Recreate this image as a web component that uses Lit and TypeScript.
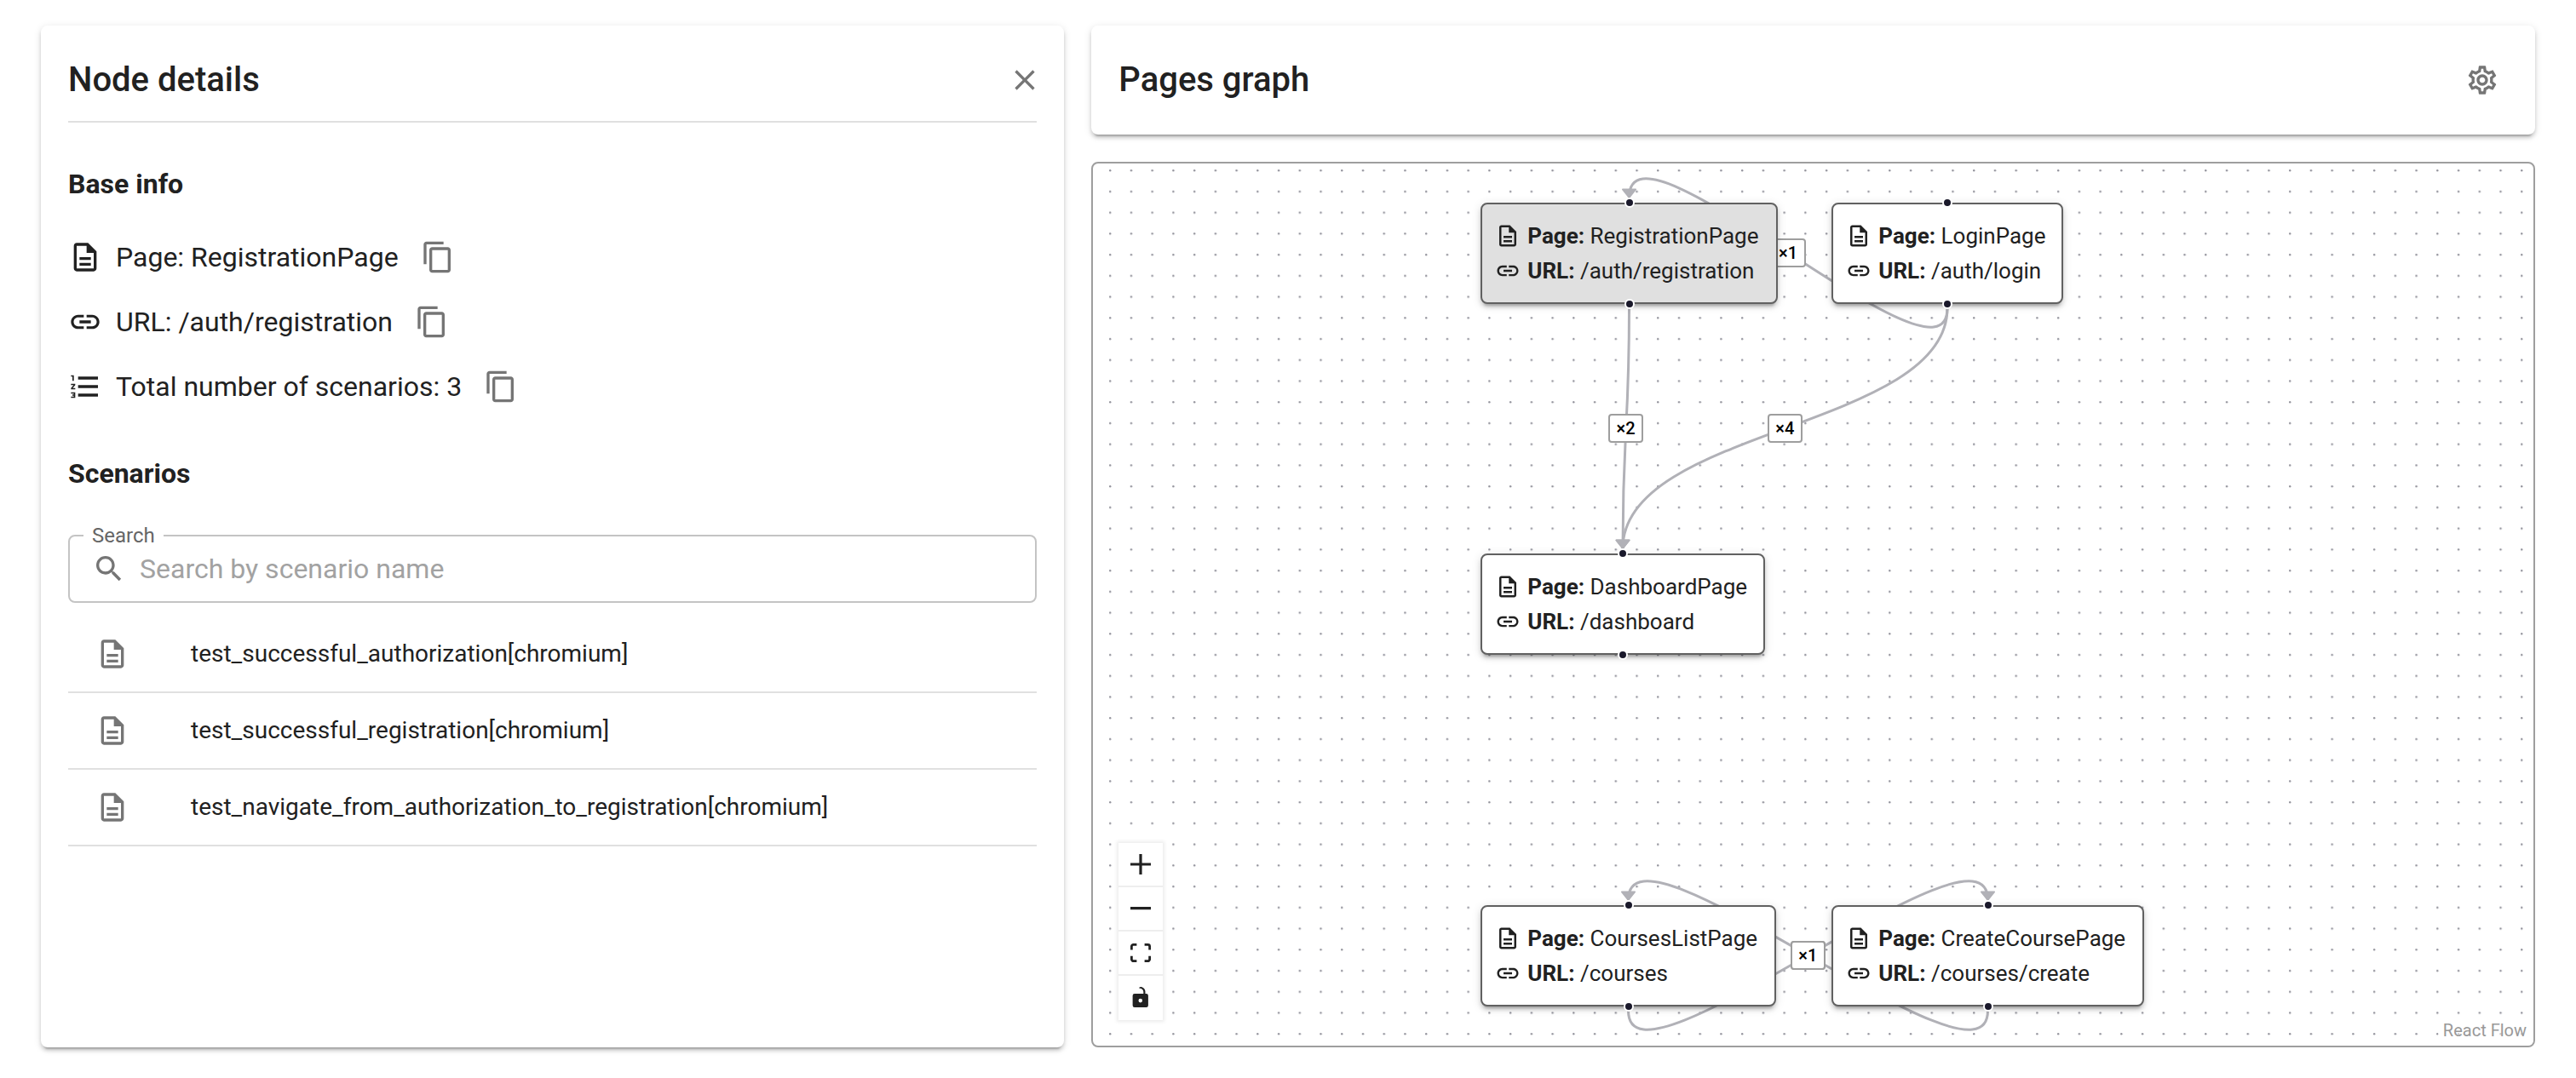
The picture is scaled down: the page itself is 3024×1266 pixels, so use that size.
import { LitElement, html, svg, css } from "lit";
import { customElement, property, state } from "lit/decorators.js";
import { classMap } from "lit/directives/class-map.js";
import { styleMap } from "lit/directives/style-map.js";

const ICONS: Record<string, { box: string; d: string }> = {
  page: {
    box: "0 0 24 24",
    d: "M8 16h8v2H8zm0-4h8v2H8zm6-10H6c-1.1 0-2 .9-2 2v16c0 1.1.89 2 1.99 2H18c1.1 0 2-.9 2-2V8l-6-6zm4 18H6V4h7v5h5v11z",
  },
  link: {
    box: "0 0 24 24",
    d: "M3.9 12c0-1.71 1.39-3.1 3.1-3.1h4V7H7c-2.76 0-5 2.24-5 5s2.24 5 5 5h4v-1.9H7c-1.71 0-3.1-1.39-3.1-3.1zM8 13h8v-2H8v2zm9-6h-4v1.9h4c1.71 0 3.1 1.39 3.1 3.1s-1.39 3.1-3.1 3.1h-4V17h4c2.76 0 5-2.24 5-5s-2.24-5-5-5z",
  },
  list: {
    box: "0 0 24 24",
    d: "M2 17h2v.5H3v1h1v.5H2v1h3v-4H2v1zm1-9h1V4H2v1h1v3zm-1 3h1.8L2 13.1v.9h3v-1H3.2L5 10.9V10H2v1zm5-6v2h14V5H7zm0 14h14v-2H7v2zm0-6h14v-2H7v2z",
  },
  copy: {
    box: "0 0 24 24",
    d: "M16 1H4c-1.1 0-2 .9-2 2v14h2V3h12V1zm3 4H8c-1.1 0-2 .9-2 2v14c0 1.1.9 2 2 2h11c1.1 0 2-.9 2-2V7c0-1.1-.9-2-2-2zm0 16H8V7h11v14z",
  },
  search: {
    box: "0 0 24 24",
    d: "M15.5 14h-.79l-.28-.27C15.41 12.59 16 11.11 16 9.5 16 5.91 13.09 3 9.5 3S3 5.91 3 9.5 5.91 16 9.5 16c1.61 0 3.09-.59 4.23-1.57l.27.28v.79l5 4.99L20.49 19l-4.99-5zm-6 0C7.01 14 5 11.99 5 9.5S7.01 5 9.5 5 14 7.01 14 9.5 11.99 14 9.5 14z",
  },
  close: {
    box: "0 0 24 24",
    d: "M19 6.41 17.59 5 12 10.59 6.41 5 5 6.41 10.59 12 5 17.59 6.41 19 12 13.41 17.59 19 19 17.59 13.41 12z",
  },
  settings: {
    box: "0 0 24 24",
    d: "M19.43 12.98c.04-.32.07-.64.07-.98 0-.34-.03-.66-.07-.98l2.11-1.65c.19-.15.24-.42.12-.64l-2-3.46c-.09-.16-.26-.25-.44-.25-.06 0-.12.01-.17.03l-2.49 1c-.52-.4-1.08-.73-1.69-.98l-.38-2.65C14.46 2.18 14.25 2 14 2h-4c-.25 0-.46.18-.49.42l-.38 2.65c-.61.25-1.17.59-1.69.98l-2.49-1c-.06-.02-.12-.03-.18-.03-.17 0-.34.09-.43.25l-2 3.46c-.13.22-.07.49.12.64l2.11 1.65c-.04.32-.07.65-.07.98 0 .33.03.66.07.98l-2.11 1.65c-.19.15-.24.42-.12.64l2 3.46c.09.16.26.25.44.25.06 0 .12-.01.17-.03l2.49-1c.52.4 1.08.73 1.69.98l.38 2.65c.03.24.24.42.49.42h4c.25 0 .46-.18.49-.42l.38-2.65c.61-.25 1.17-.59 1.69-.98l2.49 1c.06.02.12.03.18.03.17 0 .34-.09.43-.25l2-3.46c.12-.22.07-.49-.12-.64l-2.11-1.65zm-1.98-1.71c.04.31.05.52.05.73 0 .21-.02.43-.05.73l-.14 1.13.89.7 1.08.84-.7 1.21-1.27-.51-1.04-.42-.9.68c-.43.32-.84.56-1.25.73l-1.06.43-.16 1.13-.2 1.35h-1.4l-.19-1.35-.16-1.13-1.06-.43c-.43-.18-.83-.41-1.23-.71l-.91-.7-1.06.43-1.27.51-.7-1.21 1.08-.84.89-.7-.14-1.13c-.03-.31-.05-.54-.05-.74s.02-.43.05-.73l.14-1.13-.89-.7-1.08-.84.7-1.21 1.27.51 1.04.42.9-.68c.43-.32.84-.56 1.25-.73l1.06-.43.16-1.13.2-1.35h1.39l.19 1.35.16 1.13 1.06.43c.43.18.83.41 1.23.71l.91.7 1.06-.43 1.27-.51.7 1.21-1.07.85-.89.7.14 1.13zM12 8c-2.21 0-4 1.79-4 4s1.79 4 4 4 4-1.79 4-4-1.79-4-4-4zm0 6c-1.1 0-2-.9-2-2s.9-2 2-2 2 .9 2 2-.9 2-2 2z",
  },
  plus: {
    box: "0 0 32 32",
    d: "M32 18.133H18.133V32h-4.266V18.133H0v-4.266h13.867V0h4.266v13.867H32z",
  },
  minus: { box: "0 0 32 5", d: "M0 0h32v4.2H0z" },
  fit: {
    box: "0 0 32 30",
    d: "M3.692 4.63c0-.53.4-.938.939-.938h5.215V0H4.708C2.13 0 0 2.054 0 4.63v5.216h3.692V4.631zM27.354 0h-5.2v3.692h5.17c.53 0 .984.4.984.939v5.215H32V4.631A4.624 4.624 0 0027.354 0zm.954 24.83c0 .532-.4.94-.939.94h-5.215v3.768h5.215c2.577 0 4.631-2.13 4.631-4.707v-5.139h-3.692v5.139zm-23.677.94c-.531 0-.939-.4-.939-.94v-5.138H0v5.139c0 2.577 2.13 4.707 4.708 4.707h5.138V25.77H4.631z",
  },
  unlock: {
    box: "0 0 25 32",
    d: "M21.333 10.667H19.81V7.619C19.81 3.429 16.38 0 12.19 0c-4.114 1.828-1.37 2.133.305 2.438 1.676.305 4.42 2.59 4.42 5.181v3.048H3.047A3.056 3.056 0 000 13.714v15.238A3.056 3.056 0 003.048 32h18.285a3.056 3.056 0 003.048-3.048V13.714a3.056 3.056 0 00-3.048-3.047zM12.19 24.533a3.056 3.056 0 01-3.047-3.047 3.056 3.056 0 013.047-3.048 3.056 3.056 0 013.048 3.048 3.056 3.056 0 01-3.048 3.047z",
  },
};

function icon(name: string, cls = "icon") {
  const { box, d } = ICONS[name];
  return html`<svg class=${cls} viewBox=${box} aria-hidden="true"><path d=${d}></path></svg>`;
}

const base = css`
  :host {
    display: block;
    box-sizing: border-box;
    font-family: Roboto, "Liberation Sans", sans-serif;
    color: #212121;
  }
  *,
  *::before,
  *::after {
    box-sizing: border-box;
  }
  h1,
  h2,
  ul,
  dl,
  p {
    margin: 0;
    padding: 0;
  }
  button {
    border: 0;
    background: none;
    font: inherit;
    color: inherit;
    cursor: pointer;
  }
  .icon {
    display: block;
    flex: none;
    width: 40px;
    height: 40px;
    fill: currentColor;
  }
  .card {
    background: #fff;
    border-radius: 8px;
    padding: 32px;
    box-shadow: 0 6px 2px -4px rgba(0, 0, 0, 0.2), 0 4px 4px rgba(0, 0, 0, 0.14),
      0 2px 10px rgba(0, 0, 0, 0.12);
  }
  .bar {
    display: flex;
    align-items: center;
    justify-content: space-between;
    height: 64px;
  }
  .title {
    font-size: 40px;
    line-height: 64px;
    font-weight: 500;
  }
  .icon-button {
    display: grid;
    place-items: center;
    flex: none;
    width: 60px;
    height: 60px;
    padding: 0;
    border-radius: 50%;
    color: #757575;
  }
`;

@customElement("node-details")
class NodeDetails extends LitElement {
  static styles = [
    base,
    css`
      .panel {
        height: 100%;
      }
      .close {
        margin-right: -16px;
      }
      .head {
        padding-bottom: 16px;
        border-bottom: 2px solid #e0e0e0;
      }
      .subtitle {
        margin-top: 48px;
        font-size: 32px;
        line-height: 48px;
        font-weight: 700;
      }
      .info {
        display: flex;
        flex-direction: column;
        gap: 16px;
        margin-top: 32px;
        list-style: none;
      }
      .info-row {
        display: flex;
        align-items: center;
        gap: 16px;
        height: 60px;
        font-size: 32px;
        line-height: 48px;
      }
      .field {
        min-width: 0;
        margin: 48px 0 0;
        padding: 0;
        border: 2px solid #c4c4c4;
        border-radius: 8px;
      }
      .legend {
        height: 2px;
        margin-left: 16px;
        padding: 0 10px;
        font-size: 24px;
        line-height: 2px;
        color: #666;
      }
      .field-body {
        display: flex;
        align-items: center;
        gap: 16px;
        height: 76px;
        padding: 0 26px;
        color: #757575;
      }
      .input {
        flex: 1;
        min-width: 0;
        height: 46px;
        padding: 0;
        border: 0;
        outline: 0;
        background: none;
        font: inherit;
        font-size: 32px;
        color: #212121;
      }
      .input::placeholder {
        color: #a2a2a2;
        opacity: 1;
      }
      .scenarios {
        margin-top: 16px;
        list-style: none;
      }
      .scenario {
        border-bottom: 2px solid #e0e0e0;
      }
      .scenario-button {
        display: flex;
        align-items: center;
        gap: 72px;
        width: 100%;
        height: 88px;
        padding: 0 32px;
        font-size: 28px;
        line-height: 40px;
        text-align: left;
      }
      .muted {
        color: #757575;
      }
    `,
  ];

  @state() private query = "";

  private info = [
    { icon: "page", text: "Page: RegistrationPage" },
    { icon: "link", text: "URL: /auth/registration" },
    { icon: "list", text: "Total number of scenarios: 3" },
  ];

  private scenarios = [
    "test_successful_authorization[chromium]",
    "test_successful_registration[chromium]",
    "test_navigate_from_authorization_to_registration[chromium]",
  ];

  render() {
    const shown = this.scenarios.filter((s) => s.includes(this.query));
    return html`
      <section class="card panel">
        <header class="head">
          <div class="bar">
            <h1 class="title">Node details</h1>
            <button class="icon-button close" aria-label="Close">${icon("close")}</button>
          </div>
        </header>
        <h2 class="subtitle">Base info</h2>
        <ul class="info">
          ${this.info.map(
            (row) => html`<li class="info-row">
              ${icon(row.icon)}<span>${row.text}</span>
              <button class="icon-button" aria-label="Copy">${icon("copy")}</button>
            </li>`
          )}
        </ul>
        <h2 class="subtitle">Scenarios</h2>
        <fieldset class="field">
          <legend class="legend"><label for="search">Search</label></legend>
          <div class="field-body">
            ${icon("search")}
            <input
              class="input"
              id="search"
              type="text"
              placeholder="Search by scenario name"
              .value=${this.query}
              @input=${(e: Event) => (this.query = (e.target as HTMLInputElement).value)}
            />
          </div>
        </fieldset>
        <ul class="scenarios">
          ${shown.map(
            (name) => html`<li class="scenario">
              <button class="scenario-button">
                <span class="muted">${icon("page")}</span><span>${name}</span>
              </button>
            </li>`
          )}
        </ul>
      </section>
    `;
  }
}

interface GraphNode {
  id: string;
  page: string;
  url: string;
  x: number;
  y: number;
  width: number;
}

interface GraphEdge {
  from: string;
  to: string;
  count: number;
}

const ZOOM = 2.4732;
const NODE_HEIGHT = 119;
const SOURCE_GAP = 5;
const TARGET_GAP = 6;

const NODES: GraphNode[] = [
  { id: "registration", page: "RegistrationPage", url: "/auth/registration", x: 455, y: 46, width: 349 },
  { id: "login", page: "LoginPage", url: "/auth/login", x: 867, y: 46, width: 272 },
  { id: "dashboard", page: "DashboardPage", url: "/dashboard", x: 455, y: 458, width: 334 },
  { id: "courses", page: "CoursesListPage", url: "/courses", x: 455, y: 871, width: 347 },
  { id: "create", page: "CreateCoursePage", url: "/courses/create", x: 867, y: 871, width: 367 },
];

const EDGES: GraphEdge[] = [
  { from: "login", to: "registration", count: 1 },
  { from: "registration", to: "dashboard", count: 2 },
  { from: "login", to: "dashboard", count: 4 },
  { from: "courses", to: "create", count: 1 },
  { from: "create", to: "courses", count: 1 },
];

function route(edge: GraphEdge) {
  const source = NODES.find((n) => n.id === edge.from)!;
  const target = NODES.find((n) => n.id === edge.to)!;
  const sx = source.x + source.width / 2;
  const sy = source.y + NODE_HEIGHT + SOURCE_GAP;
  const tx = target.x + target.width / 2;
  const ty = target.y - TARGET_GAP;
  const distance = ty - sy;
  const bend = distance >= 0 ? distance / 2 : 6.25 * Math.sqrt(-distance * ZOOM);
  return {
    path: `M${sx},${sy} C${sx},${sy + bend} ${tx},${ty - bend} ${tx},${ty}`,
    x: (sx + tx) / 2,
    y: (sy + ty) / 2,
  };
}

@customElement("flow-node")
class FlowNode extends LitElement {
  static styles = [
    base,
    css`
      .node {
        position: relative;
        display: flex;
        flex-direction: column;
        gap: 1px;
        height: 119px;
        padding: 17px 15px;
        border: 2px solid #616161;
        border-radius: 8px;
        background: #fff;
        box-shadow: 0 6px 3px -4px rgba(0, 0, 0, 0.2), 0 4px 5px rgba(0, 0, 0, 0.14),
          0 2px 12px rgba(0, 0, 0, 0.12);
      }
      .selected {
        background: #e0e0e0;
      }
      .line {
        display: flex;
        align-items: center;
        gap: 8px;
        font-size: 26px;
        line-height: 40px;
        white-space: nowrap;
      }
      .small {
        display: block;
        flex: none;
        width: 30px;
        height: 30px;
        fill: currentColor;
      }
      .handle {
        position: absolute;
        left: 50%;
        width: 12px;
        height: 12px;
        margin: -6px;
        border: 2px solid #fff;
        border-radius: 50%;
        background: #1a192b;
      }
      .top {
        top: -2px;
      }
      .bottom {
        bottom: -2px;
      }
    `,
  ];

  @property() page = "";
  @property() url = "";
  @property({ type: Boolean }) selected = false;

  render() {
    return html`<div class=${classMap({ node: true, selected: this.selected })}>
      <div class="line">${icon("page", "small")}<span><b>Page:</b> ${this.page}</span></div>
      <div class="line">${icon("link", "small")}<span><b>URL:</b> ${this.url}</span></div>
      <span class="handle top"></span><span class="handle bottom"></span>
    </div>`;
  }
}

@customElement("pages-graph")
class PagesGraph extends LitElement {
  static styles = [
    base,
    css`
      :host {
        display: flex;
        flex-direction: column;
        gap: 32px;
      }
      .canvas {
        position: relative;
        flex: 1;
        overflow: hidden;
        border: 2px solid #9e9e9e;
        border-radius: 8px;
      }
      .layer {
        position: absolute;
        inset: 0;
        width: 100%;
        height: 100%;
      }
      .edge {
        fill: none;
        stroke: #b1b1b7;
        stroke-width: 3;
      }
      .arrow {
        fill: #b1b1b7;
        stroke: #b1b1b7;
        stroke-linecap: round;
        stroke-linejoin: round;
      }
      .dot {
        fill: #91919a;
      }
      .count {
        position: absolute;
        width: 41px;
        height: 34px;
        margin: -17px 0 0 -21px;
        border: 2px solid #9e9e9e;
        border-radius: 4px;
        background: #fff;
        font-size: 20px;
        line-height: 30px;
        font-weight: 500;
        text-align: center;
        color: #000;
      }
      .placed {
        position: absolute;
      }
      .controls {
        position: absolute;
        left: 30px;
        bottom: 30px;
        display: flex;
        flex-direction: column;
        box-shadow: 0 0 4px 2px rgba(0, 0, 0, 0.08);
      }
      .control {
        display: grid;
        place-items: center;
        width: 52px;
        height: 52px;
        padding: 0;
        border-bottom: 2px solid #eee;
        background: #fff;
      }
      .control:last-child {
        border-bottom-color: #fff;
      }
      .glyph {
        display: block;
        width: 24px;
        max-height: 24px;
        fill: currentColor;
      }
      .credit {
        position: absolute;
        right: 0;
        bottom: 0;
        padding: 4px 8px 6px 6px;
        background: rgba(255, 255, 255, 0.5);
        font-size: 20px;
        line-height: 24px;
      }
      .credit-link {
        color: #999;
        text-decoration: none;
      }
    `,
  ];

  private controls = [
    ["plus", "Zoom in"],
    ["minus", "Zoom out"],
    ["fit", "Fit view"],
    ["unlock", "Toggle interactivity"],
  ];

  render() {
    const gap = 10 * ZOOM;
    const routes = EDGES.map((edge) => ({ ...route(edge), count: edge.count }));
    return html`
      <header class="card">
        <div class="bar">
          <h1 class="title">Pages graph</h1>
          <button class="icon-button" aria-label="Settings">${icon("settings")}</button>
        </div>
      </header>
      <div class="canvas">
        <svg class="layer" aria-hidden="true">
          <defs>
            <pattern id="dots" x="19" y="7" width=${gap} height=${gap} patternUnits="userSpaceOnUse">
              <circle class="dot" cx="1.2" cy="1.2" r="1.2"></circle>
            </pattern>
            <marker
              id="arrow"
              viewBox="-10 -10 20 20"
              markerWidth="38"
              markerHeight="38"
              markerUnits="userSpaceOnUse"
              orient="auto-start-reverse"
            >
              <polyline class="arrow" points="-5,-4 0,0 -5,4 -5,-4"></polyline>
            </marker>
          </defs>
          <rect width="100%" height="100%" fill="url(#dots)"></rect>
          ${routes.map((r) => svg`<path class="edge" d=${r.path} marker-end="url(#arrow)"></path>`)}
        </svg>
        ${routes.map(
          (r) => html`<span class="count" style=${styleMap({ left: `${r.x}px`, top: `${r.y}px` })}>×${r.count}</span>`
        )}
        ${NODES.map(
          (n) => html`<flow-node
            class="placed"
            style=${styleMap({ left: `${n.x}px`, top: `${n.y}px`, width: `${n.width}px` })}
            .page=${n.page}
            .url=${n.url}
            .selected=${n.id === "registration"}
          ></flow-node>`
        )}
        <div class="controls">
          ${this.controls.map(
            ([name, label]) => html`<button class="control" aria-label=${label}>${icon(name, "glyph")}</button>`
          )}
        </div>
        <div class="credit"><a class="credit-link" href="https://reactflow.dev">React Flow</a></div>
      </div>
    `;
  }
}

@customElement("app-root")
class AppRoot extends LitElement {
  static styles = [
    base,
    css`
      :host {
        display: grid;
        grid-template-columns: repeat(12, minmax(0, 1fr));
        gap: 32px;
        min-height: 100vh;
        padding: 30px 48px 36px;
        background: #fff;
      }
      .details {
        grid-column: span 5;
      }
      .graph {
        grid-column: span 7;
      }
    `,
  ];

  render() {
    return html`<node-details class="details"></node-details><pages-graph class="graph"></pages-graph>`;
  }
}
